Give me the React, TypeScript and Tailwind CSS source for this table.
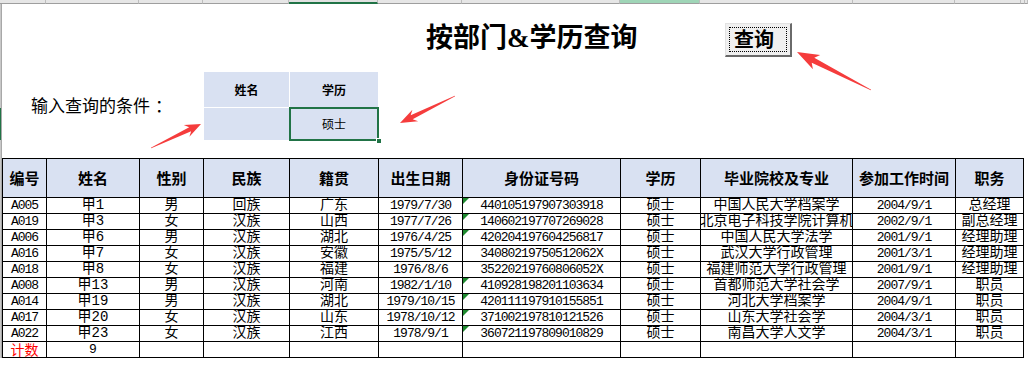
import React from "react";

type Row = string[];

const rows: Row[] = [
  ["A005", "甲1", "男", "回族", "广东", "1979/7/30", "440105197907303918", "硕士", "中国人民大学档案学", "2004/9/1", "总经理"],
  ["A019", "甲3", "女", "汉族", "山西", "1977/7/26", "140602197707269028", "硕士", "北京电子科技学院计算机", "2002/9/1", "副总经理"],
  ["A006", "甲6", "男", "汉族", "湖北", "1976/4/25", "420204197604256817", "硕士", "中国人民大学法学", "2001/9/1", "经理助理"],
  ["A016", "甲7", "女", "汉族", "安徽", "1975/5/12", "34080219750512062X", "硕士", "武汉大学行政管理", "2001/3/1", "经理助理"],
  ["A018", "甲8", "女", "汉族", "福建", "1976/8/6", "35220219760806052X", "硕士", "福建师范大学行政管理", "2001/9/1", "经理助理"],
  ["A008", "甲13", "男", "汉族", "河南", "1982/1/10", "410928198201103634", "硕士", "首都师范大学社会学", "2007/9/1", "职员"],
  ["A014", "甲19", "男", "汉族", "湖北", "1979/10/15", "420111197910155851", "硕士", "河北大学档案学", "2004/9/1", "职员"],
  ["A017", "甲20", "女", "汉族", "山东", "1978/10/12", "371002197810121526", "硕士", "山东大学社会学", "2004/3/1", "职员"],
  ["A022", "甲23", "女", "汉族", "江西", "1978/9/1", "360721197809010829", "硕士", "南昌大学人文学", "2004/3/1", "职员"],
];

const marked = [true, true, true, false, false, true, true, true, true];

const headers = ["编号", "姓名", "性别", "民族", "籍贯", "出生日期", "身份证号码", "学历", "毕业院校及专业", "参加工作时间", "职务"];

const asciiCols = new Set([0, 5, 6, 9]);

const stripCols = [
  { w: "w-[46px]", cls: "bg-[#e6e6e6] border-b border-[#9e9e9e]" },
  { w: "w-[93px]", cls: "bg-[#e6e6e6] border-b border-[#9e9e9e]" },
  { w: "w-[64px]", cls: "bg-[#e6e6e6] border-b border-[#9e9e9e]" },
  { w: "w-[86px]", cls: "bg-[#e6e6e6] border-b border-[#9e9e9e]" },
  { w: "w-[89px]", cls: "bg-[#e1e1e1] border-b-2 border-[#217346]" },
  { w: "w-[84px]", cls: "bg-[#e6e6e6] border-b border-[#9e9e9e]" },
  { w: "w-[158px]", cls: "bg-[#e6e6e6] border-b border-[#9e9e9e]" },
  { w: "w-[80px]", cls: "bg-[#9fd5b7] border-b border-[#9e9e9e]" },
  { w: "w-[153px]", cls: "bg-[#e6e6e6] border-b border-[#9e9e9e]" },
  { w: "w-[102px]", cls: "bg-[#e6e6e6] border-b border-[#9e9e9e]" },
  { w: "w-[66px]", cls: "bg-[#e6e6e6] border-b border-[#9e9e9e]" },
  { w: "w-[4px]", cls: "bg-[#e6e6e6] border-b border-[#9e9e9e]" },
  { w: "flex-1", cls: "bg-[#e6e6e6] border-b border-[#9e9e9e]" },
];

function Arrow({ x1, y1, x2, y2, h, b }: { x1: number; y1: number; x2: number; y2: number; h: number; b: number }) {
  const dx = x2 - x1;
  const dy = y2 - y1;
  const L = Math.sqrt(dx * dx + dy * dy);
  const ang = (Math.atan2(dy, dx) * 180) / Math.PI;
  const s = b * 0.35;
  const pts = [
    [-L, -0.4],
    [-h + 4, -s],
    [-h, -b],
    [0, 0],
    [-h, b],
    [-h + 4, s],
    [-L, 0.4],
  ]
    .map((p) => p.join(","))
    .join(" ");
  return <polygon points={pts} fill="#f53c3c" transform={`translate(${x2} ${y2}) rotate(${ang})`} />;
}

export default function App() {
  return (
    <div className="relative w-[1028px] h-[375px] overflow-hidden bg-white text-black font-['Noto_Sans_CJK_SC',sans-serif]">
      {/* column header strip */}
      <div className="flex h-[4px]">
        {stripCols.map((c, i) => (
          <div key={i} className={`${c.w} ${c.cls} border-r border-r-[#bdbdbd]`} />
        ))}
      </div>

      <div className="flex">
        {/* row header edge */}
        <div className="w-[2px] flex flex-col bg-[#c8c8c8] border-r border-[#a8a8a8]">
          <div className="h-[104px]" />
          <div className="h-[32px] bg-[#217346]" />
          <div className="flex-1" />
        </div>

        <div className="flex-1 flex flex-col">
          {/* top area */}
          <div className="h-[154px] flex">
            <div className="w-[202px] pl-[29px] pt-[89px]">
              <div className="text-[17px] leading-[24px] whitespace-nowrap">
                输入查询的条件<span className="pl-[5px]">：</span>
              </div>
            </div>
            <div className="w-[176px] pt-[68px]">
              <div className="grid grid-cols-[85px_88px] grid-rows-[35px_32px] gap-px bg-white">
                <div className="bg-[#d9e1f2] flex items-center justify-center text-[12px] font-bold">姓名</div>
                <div className="bg-[#d9e1f2] flex items-center justify-center text-[12px] font-bold">学历</div>
                <div className="bg-[#d9e1f2]" />
                <div className="relative bg-[#d9e1f2] flex items-center justify-center text-[12px] outline-2 outline-[#217346] -outline-offset-1">
                  硕士
                  <div className="absolute right-[-4px] bottom-[-4px] w-[6px] h-[6px] bg-[#217346] border border-white" />
                </div>
              </div>
            </div>
            <div className="pl-[46px] pt-[18px]">
              <div className="text-[27px] leading-[32px] font-bold whitespace-nowrap font-['Liberation_Serif','Noto_Sans_CJK_SC',serif]">
                按部门&amp;学历查询
              </div>
            </div>
          </div>

          {/* data table */}
          <div className="w-[1022px] bg-black p-px grid gap-px grid-cols-[43px_92px_63px_85px_88px_83px_157px_79px_151px_102px_67px] grid-rows-[38px_repeat(10,15px)]">
            {headers.map((h) => (
              <div key={h} className="bg-[#d9e1f2] flex items-center justify-center text-[15px] font-bold whitespace-nowrap">
                {h}
              </div>
            ))}
            {rows.map((r, ri) =>
              r.map((v, ci) => (
                <div
                  key={`${ri}-${ci}`}
                  className={
                    asciiCols.has(ci)
                      ? "relative bg-white flex items-center justify-center overflow-hidden whitespace-nowrap text-[13px] leading-[15px] tracking-[-1px] font-['Liberation_Mono',monospace]"
                      : "bg-white flex items-center justify-center overflow-hidden whitespace-nowrap text-[14px] leading-[15px] font-['Liberation_Mono','Noto_Sans_CJK_SC',monospace]"
                  }
                >
                  {ci === 6 && marked[ri] && (
                    <svg className="absolute left-0 top-0" width="6" height="6" viewBox="0 0 6 6">
                      <polygon points="0,0 6,0 0,6" fill="#1e8a2f" />
                    </svg>
                  )}
                  {v}
                </div>
              ))
            )}
            <div className="bg-white flex items-center justify-center text-[14px] leading-[15px] text-[#ff0000]">计数</div>
            <div className="bg-white flex items-center justify-center text-[13px] leading-[15px] font-['Liberation_Mono',monospace]">9</div>
            {Array.from({ length: 9 }).map((_, i) => (
              <div key={i} className="bg-white" />
            ))}
          </div>
        </div>
      </div>

      {/* query button (floating control) */}
      <div className="absolute left-[725px] top-[23px] w-[67px] h-[34px] bg-[#f0f0f0] border-t border-l border-[#e2e2e2] border-r-2 border-b-2 border-r-[#6a6a6a] border-b-[#6a6a6a] flex items-center pl-[8px]">
        <div className="absolute inset-[3px] border border-dotted border-black" />
        <span className="text-[20px] leading-[24px] font-bold font-['Liberation_Serif','Noto_Sans_CJK_SC',serif]">查询</span>
      </div>

      {/* annotation arrows */}
      <svg className="absolute left-0 top-0 pointer-events-none" width="1028" height="375">
        <Arrow x1={871} y1={90} x2={797} y2={52} h={22} b={8} />
        <Arrow x1={151} y1={148} x2={201} y2={124} h={16} b={6.5} />
        <Arrow x1={455} y1={96} x2={400} y2={123} h={17} b={6.5} />
      </svg>
    </div>
  );
}
